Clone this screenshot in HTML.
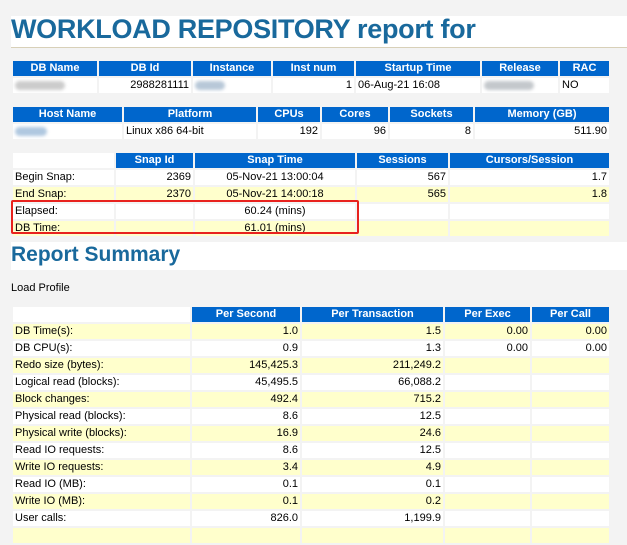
<!DOCTYPE html>
<html><head><style>
body{margin:0;width:627px;height:517px;overflow:hidden;background:#f3f3f3;font-family:"Liberation Sans",Arial,sans-serif;position:relative}
.t{position:absolute;border-collapse:separate;border-spacing:2px;font-size:11px;color:#000}
.t td,.t th{padding:0 2px;height:15px;line-height:15px;white-space:nowrap;overflow:hidden}
.t th{background:#0066cc;color:#fff;font-weight:bold;text-align:center}
.t td{background:#fff}
.t tr.y td{background:#ffffcc}
.r{text-align:right}.c{text-align:center}
.blank{background:#fff!important}
.blur{display:inline-block;height:9px;border-radius:5px;vertical-align:middle;filter:blur(1.5px)}
</style></head><body>
<div style="position:absolute;left:11px;top:16px;width:616px;height:31px;background:#fff;border-bottom:1px solid #d8d0b8"></div>
<div style="position:absolute;left:11px;top:14px;font-size:27px;font-weight:bold;color:#19699c;letter-spacing:-0.3px">WORKLOAD REPOSITORY <span style="color:#19699c">report for</span></div>

<table class="t" style="left:11px;top:59px;width:600px">
<tr><th style="width:80px">DB Name</th><th style="width:88px">DB Id</th><th style="width:74px">Instance</th><th style="width:77px">Inst num</th><th style="width:120px">Startup Time</th><th style="width:72px">Release</th><th>RAC</th></tr>
<tr><td><span class="blur" style="width:50px;background:#ccc"></span></td><td class="r">2988281111</td><td><span class="blur" style="width:30px;background:#b8c8d8"></span></td><td class="r">1</td><td>06-Aug-21 16:08</td><td><span class="blur" style="width:50px;background:#c4c8cc"></span></td><td>NO</td></tr>
</table>

<table class="t" style="left:11px;top:105px;width:600px">
<tr><th style="width:105px">Host Name</th><th style="width:128px">Platform</th><th style="width:58px">CPUs</th><th style="width:62px">Cores</th><th style="width:79px">Sockets</th><th>Memory (GB)</th></tr>
<tr><td><span class="blur" style="width:32px;background:#b0c8e0"></span></td><td>Linux x86 64-bit</td><td class="r">192</td><td class="r">96</td><td class="r">8</td><td class="r">511.90</td></tr>
</table>

<table class="t" style="left:11px;top:151px;width:600px">
<tr><td class="blank" style="width:97px"></td><th style="width:73px">Snap Id</th><th style="width:156px">Snap Time</th><th style="width:87px">Sessions</th><th>Cursors/Session</th></tr>
<tr><td>Begin Snap:</td><td class="r">2369</td><td class="c">05-Nov-21 13:00:04</td><td class="r">567</td><td class="r">1.7</td></tr>
<tr class="y"><td>End Snap:</td><td class="r">2370</td><td class="c">05-Nov-21 14:00:18</td><td class="r">565</td><td class="r">1.8</td></tr>
<tr><td>Elapsed:</td><td></td><td class="c">60.24 (mins)</td><td></td><td></td></tr>
<tr class="y"><td>DB Time:</td><td></td><td class="c">61.01 (mins)</td><td></td><td></td></tr>
</table>
<div style="position:absolute;left:11px;top:200px;width:344px;height:30px;border:2px solid #e8221e;border-radius:2px"></div>

<div style="position:absolute;left:11px;top:242px;width:616px;height:28px;background:#fff"></div>
<div style="position:absolute;left:11px;top:243px;font-size:21px;font-weight:bold;color:#19699c">Report Summary</div>
<div style="position:absolute;left:11px;top:282px;font-size:11px">Load Profile</div>

<table class="t" style="left:11px;top:305px;width:600px">
<tr><td class="blank" style="width:173px"></td><th style="width:104px">Per Second</th><th style="width:137px">Per Transaction</th><th style="width:81px">Per Exec</th><th>Per Call</th></tr>
<tr class="y"><td>DB Time(s):</td><td class="r">1.0</td><td class="r">1.5</td><td class="r">0.00</td><td class="r">0.00</td></tr>
<tr><td>DB CPU(s):</td><td class="r">0.9</td><td class="r">1.3</td><td class="r">0.00</td><td class="r">0.00</td></tr>
<tr class="y"><td>Redo size (bytes):</td><td class="r">145,425.3</td><td class="r">211,249.2</td><td></td><td></td></tr>
<tr><td>Logical read (blocks):</td><td class="r">45,495.5</td><td class="r">66,088.2</td><td></td><td></td></tr>
<tr class="y"><td>Block changes:</td><td class="r">492.4</td><td class="r">715.2</td><td></td><td></td></tr>
<tr><td>Physical read (blocks):</td><td class="r">8.6</td><td class="r">12.5</td><td></td><td></td></tr>
<tr class="y"><td>Physical write (blocks):</td><td class="r">16.9</td><td class="r">24.6</td><td></td><td></td></tr>
<tr><td>Read IO requests:</td><td class="r">8.6</td><td class="r">12.5</td><td></td><td></td></tr>
<tr class="y"><td>Write IO requests:</td><td class="r">3.4</td><td class="r">4.9</td><td></td><td></td></tr>
<tr><td>Read IO (MB):</td><td class="r">0.1</td><td class="r">0.1</td><td></td><td></td></tr>
<tr class="y"><td>Write IO (MB):</td><td class="r">0.1</td><td class="r">0.2</td><td></td><td></td></tr>
<tr><td>User calls:</td><td class="r">826.0</td><td class="r">1,199.9</td><td></td><td></td></tr>
<tr class="y"><td>&nbsp;</td><td></td><td></td><td></td><td></td></tr>
</table>
</body></html>
